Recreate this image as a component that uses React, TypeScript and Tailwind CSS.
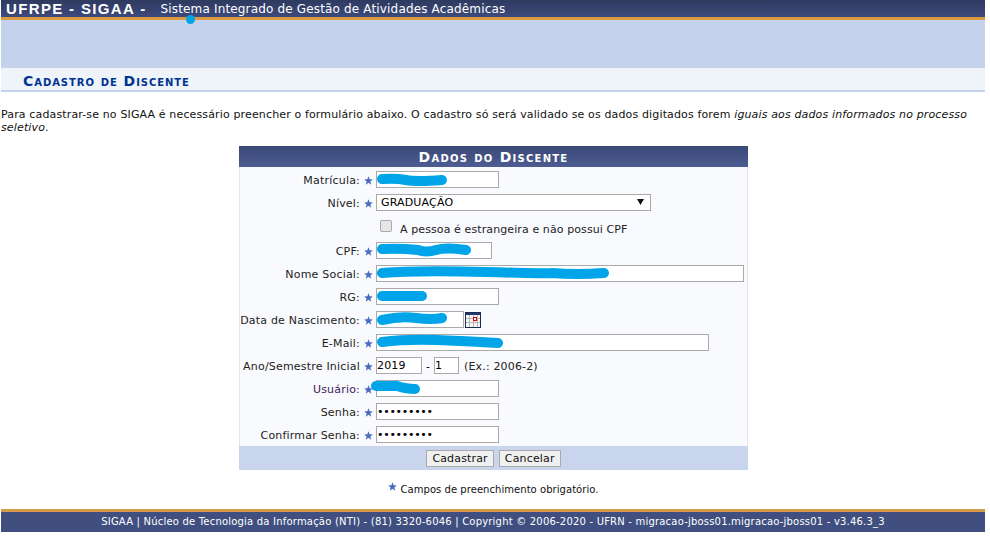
import React from "react";

const verdana = "font-['DejaVu_Sans',Verdana,sans-serif]";

// little blue star next to each required field
const Star = ({ className = "" }: { className?: string }) => (
  <svg viewBox="0 0 10 10" className={`w-[9px] h-[9px] ${className}`}>
    <polygon
      points="5,0.3 6.3,3.6 9.8,3.8 7.1,6 8,9.6 5,7.6 2,9.6 2.9,6 0.2,3.8 3.7,3.6"
      fill="#4a6cc0"
    />
  </svg>
);

// blue marker strokes that hide personal data in the screenshot
const Scribble = ({ d, w, className = "left-0" }: { d: string; w: number; className?: string }) => (
  <svg
    width={w}
    height={17}
    viewBox={`0 0 ${w} 17`}
    className={`absolute top-0 pointer-events-none ${className}`}
  >
    <path d={d} stroke="#00a4e8" strokeWidth={10} strokeLinecap="round" strokeLinejoin="round" fill="none" />
  </svg>
);

const TextBox = ({
  width,
  value,
  type = "text",
  children,
}: {
  width: string;
  value?: string;
  type?: string;
  children?: React.ReactNode;
}) => (
  <div className={`relative shrink-0 h-[17px] ${width}`}>
    <input
      readOnly
      type={type}
      value={value ?? ""}
      className={`w-full h-full bg-white border border-[#aaaaaa] px-0 text-[11px] leading-none text-black outline-none ${
        type === "password" ? "tracking-[-0.3px]" : "tracking-[0.16px]"
      } ${verdana}`}
    />
    {children}
  </div>
);

const Row = ({
  label,
  labelColor = "text-[#222222]",
  children,
}: {
  label: string;
  labelColor?: string;
  children: React.ReactNode;
}) => (
  <div className="flex items-center h-[23px]">
    <span className={`w-[120px] mt-[4px] tracking-[0.2px] text-right whitespace-nowrap ${labelColor}`}>{label}</span>
    <span className="w-[16px] mt-[1px] pl-[1px] flex justify-center shrink-0">
      <Star />
    </span>
    {children}
  </div>
);

const CalendarIcon = () => (
  <svg width="16" height="16" viewBox="0 0 16 16" className="ml-[1px] shrink-0">
    <rect x="0.5" y="0.5" width="15" height="15" fill="#f4f4f4" stroke="#1c2c4c" />
    <rect x="1" y="1" width="14" height="2" fill="#1c3a70" />
    <path d="M4.5 3v12M8.5 3v12M12.5 3v12M1 6.5h14M1 10.5h14" stroke="#b8b8b8" strokeWidth="1" />
    <rect x="8.5" y="5.5" width="3" height="3" fill="#fff" stroke="#e00000" />
  </svg>
);

const App: React.FC = () => {
  return (
    <div className={`w-[990px] h-[537px] bg-white overflow-hidden text-[11px] tracking-[0.16px] text-black ${verdana}`}>
      <div className="ml-[1px] w-[984px]">
        {/* top bar */}
        <div className="relative h-[20px] pt-[1px] bg-gradient-to-b from-[#2e3a5f] to-[#3d4a7c] border-b-[3px] border-[#dd9a40] flex items-center text-white pl-[5px]">
          <span className="font-['Liberation_Sans',Arial,sans-serif] font-bold text-[15px] tracking-[1.35px] whitespace-nowrap">
            UFRPE - SIGAA -
          </span>
          <span className="ml-[14px] text-[12px] tracking-[0.16px] whitespace-nowrap">Sistema Integrado de Gestão de Atividades Acadêmicas</span>
          <span className="absolute left-[185px] top-[15px] w-[9px] h-[9px] rounded-full bg-[#00a4e8]" />
        </div>
        <div className="h-[48px] bg-[#c4d2eb]" />
        <div className="h-[24px] bg-[#eff3fa] border-b-2 border-[#c4d2eb] pl-[22px] pt-[3px]">
          <h2 className="font-bold text-[14px] leading-[20px] [font-variant:small-caps] tracking-[0.95px] text-[#003390]">
            Cadastro de Discente
          </h2>
        </div>

        <p className="mt-[16px] leading-[13px] tracking-[0.14px] text-[#111111]">
          Para cadastrar-se no SIGAA é necessário preencher o formulário abaixo. O cadastro só será validado se os dados digitados forem{" "}
          <em>iguais aos dados informados no processo seletivo</em>.
        </p>

        {/* form */}
        <div className="mt-[12px] ml-[238px] w-[509px] bg-[#f9fafd] border-x border-[#e4e6ee]">
          <div className="-mx-[1px] h-[21px] bg-gradient-to-b from-[#3a4876] to-[#4d5d92] text-center text-white font-bold text-[14px] leading-[22px] [font-variant:small-caps] tracking-[1.25px]">
            Dados do Discente
          </div>
          <div className="pt-[1px]">
            <Row label="Matrícula:">
              <TextBox width="w-[123px]">
                <Scribble w={73} d="M6 8 Q20 7 30 9 T66 9" />
              </TextBox>
            </Row>
            <Row label="Nível:">
              <div className="relative w-[275px] h-[17px] bg-white border border-[#aaaaaa] pl-[4px] leading-[15px]">
                GRADUAÇÃO
                <svg width="7" height="6" viewBox="0 0 7 6" className="absolute right-[6px] top-[4px]">
                  <polygon points="0,0 7,0 3.5,6" fill="#111111" />
                </svg>
              </div>
            </Row>
            <div className="flex items-center h-[25px] pl-[140px]">
              <span className="w-[12px] h-[12px] rounded-[2px] bg-[#e6e6e6] border border-[#a8a8a8] -mt-[1px]" />
              <span className="ml-[8px] mt-[7px] tracking-[0.1px] text-[#222222]">A pessoa é estrangeira e não possui CPF</span>
            </div>
            <Row label="CPF:">
              <TextBox width="w-[116px]">
                <Scribble w={98} d="M6 7 Q24 6 42 8 Q50 11 60 8 T90 8" />
              </TextBox>
            </Row>
            <Row label="Nome Social:">
              <TextBox width="w-[368px]">
                <Scribble w={236} d="M6 8 Q40 5 110 7 T176 8 Q200 10 228 8" />
              </TextBox>
            </Row>
            <Row label="RG:">
              <TextBox width="w-[123px]">
                <Scribble w={56} d="M6 8 H46" />
              </TextBox>
            </Row>
            <Row label="Data de Nascimento:">
              <TextBox width="w-[88px]">
                <Scribble w={73} d="M6 9 Q24 5 40 7 T66 7" />
              </TextBox>
              <CalendarIcon />
            </Row>
            <Row label="E-Mail:">
              <TextBox width="w-[333px]">
                <Scribble w={130} d="M6 8 Q30 5 60 6 T122 9" />
              </TextBox>
            </Row>
            <Row label="Ano/Semestre Inicial">
              <TextBox width="w-[46px]" value="2019" />
              <span className="mx-[4px] mt-[4px] w-[4px]">-</span>
              <TextBox width="w-[25px]" value="1" />
              <span className="ml-[5px] mt-[3px] text-[#222222]">(Ex.: 2006-2)</span>
            </Row>
            <Row label="Usuário:" labelColor="text-[#3b1a5a]">
              <TextBox width="w-[123px]">
                <Scribble w={52} className="-left-[7px]" d="M7 6 H28 Q38 9 46 9" />
              </TextBox>
            </Row>
            <Row label="Senha:">
              <TextBox width="w-[123px]" type="password" value="123456789" />
            </Row>
            <Row label="Confirmar Senha:">
              <TextBox width="w-[123px]" type="password" value="123456789" />
            </Row>
          </div>
          <div className="-mx-[1px] h-[24px] bg-[#c9d5ec] flex items-center justify-center gap-[5px]">
            <button className="h-[17px] px-[5px] bg-[#f0f0f0] border border-[#aaaaaa] leading-none text-[11px] text-[#111111]">Cadastrar</button>
            <button className="h-[17px] px-[5px] bg-[#f0f0f0] border border-[#aaaaaa] leading-none text-[11px] text-[#111111]">Cancelar</button>
          </div>
        </div>

        <div className="mt-[11px] flex justify-center text-[10px] tracking-[0.05px] leading-[14px] text-[#111111] pl-[1px]">
          <Star className="mt-[1px] mr-[3px]" />
          <span className="mt-[2px]">Campos de preenchimento obrigatório.</span>
        </div>

        {/* footer */}
        <div className="mt-[12px] h-[23px] bg-[#404f80] border-t-[3px] border-[#d69a48] text-center text-white text-[10px] tracking-[0.2px] leading-[20px] whitespace-nowrap">
          SIGAA | Núcleo de Tecnologia da Informação (NTI) - (81) 3320-6046 | Copyright © 2006-2020 - UFRN - migracao-jboss01.migracao-jboss01 - v3.46.3_3
        </div>
      </div>
    </div>
  );
};

export default App;
